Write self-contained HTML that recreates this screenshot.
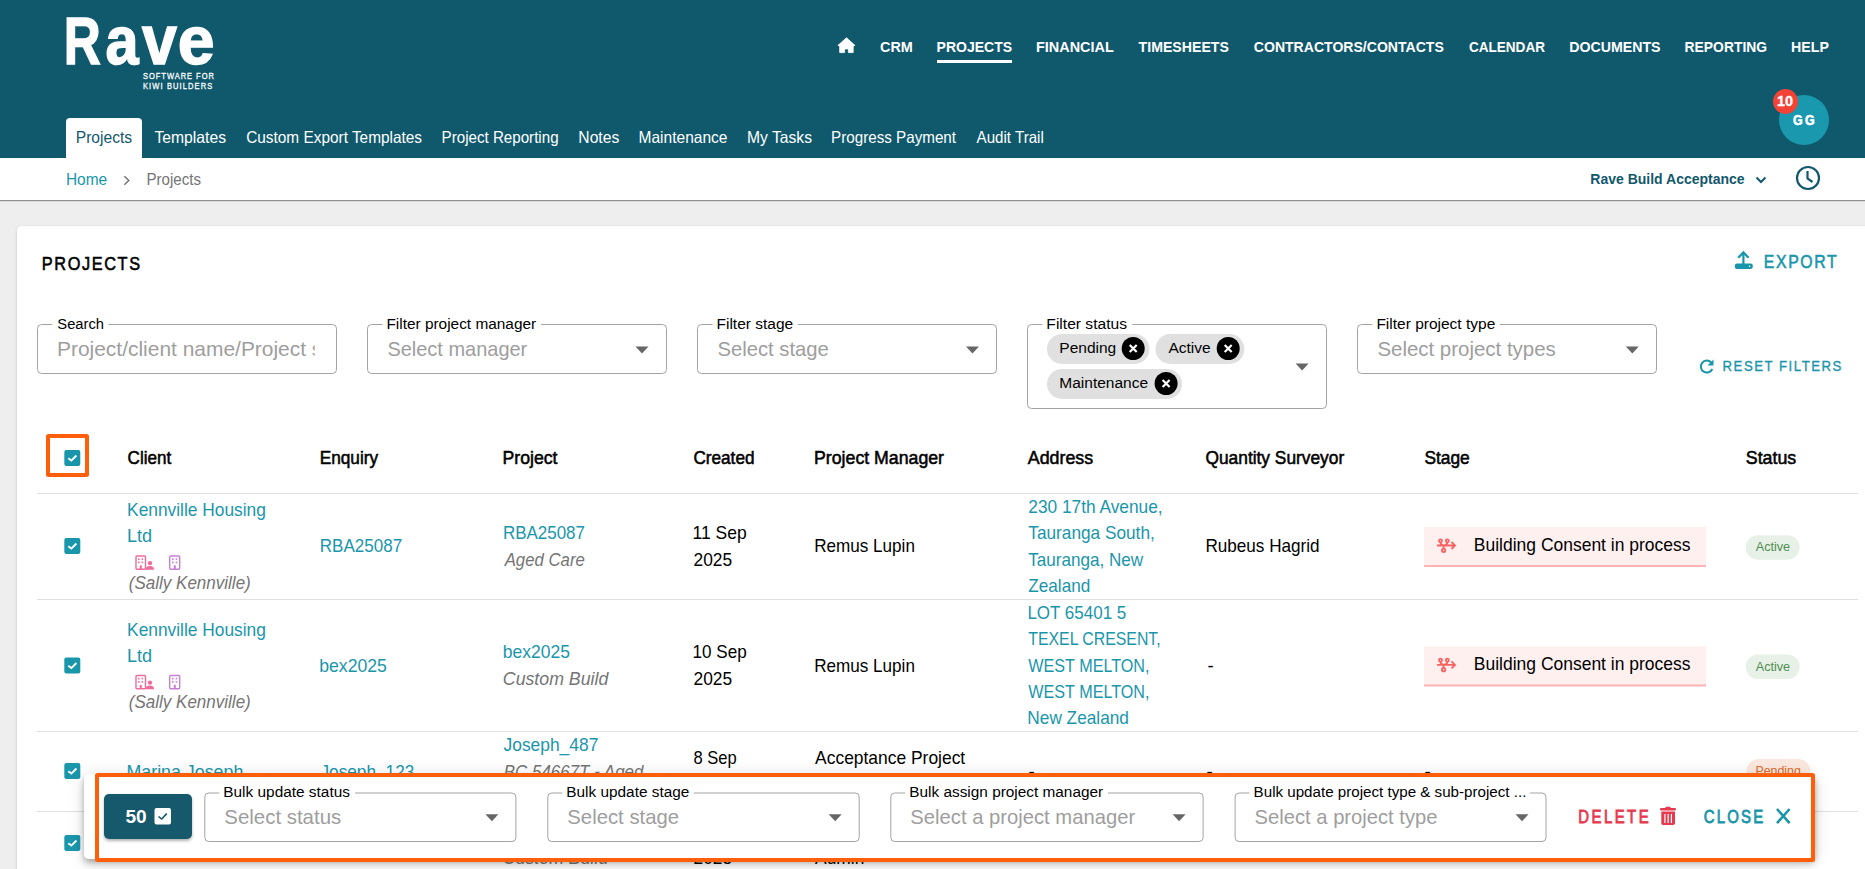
<!DOCTYPE html>
<html><head><meta charset="utf-8"><title>Projects</title>
<style>html,body{margin:0;padding:0;width:1865px;height:869px;overflow:hidden;background:#eee}svg{display:block}text{font-family:"Liberation Sans",sans-serif}</style>
</head><body><svg width="1865" height="869" viewBox="0 0 1865 869">
<rect x="0" y="0" width="1865" height="869" fill="#eeeeee"/>
<rect x="0" y="0" width="1865" height="158" fill="#10596d"/>
<text x="63.74" y="64.3" font-size="67" font-weight="bold" stroke="#fff" stroke-width="1.5" fill="#fff" textLength="37.06" lengthAdjust="spacingAndGlyphs">R</text>
<text x="105.58" y="64.3" font-size="69" font-weight="bold" stroke="#fff" stroke-width="1.5" fill="#fff" textLength="33.09" lengthAdjust="spacingAndGlyphs">a</text>
<text x="141.90" y="64.3" font-size="69.5" font-weight="bold" stroke="#fff" stroke-width="1.5" fill="#fff" textLength="34.89" lengthAdjust="spacingAndGlyphs">v</text>
<text x="177.68" y="64.3" font-size="69" font-weight="bold" stroke="#fff" stroke-width="1.5" fill="#fff" textLength="36.84" lengthAdjust="spacingAndGlyphs">e</text>
<text transform="translate(143.00 78.5) scale(0.8 1)" x="0" y="0" font-size="9.4" stroke="#fff" stroke-width="0.312" fill="#fff" style="letter-spacing:1.214px">SOFTWARE FOR</text>
<text transform="translate(143.00 88.5) scale(0.8 1)" x="0" y="0" font-size="9.4" stroke="#fff" stroke-width="0.312" fill="#fff" style="letter-spacing:1.392px">KIWI BUILDERS</text>
<path d="M846.5 37.8 L837.9 45.4 L839.7 45.9 L839.7 52.6 L844.6 52.6 L844.6 48.9 L848.4 48.9 L848.4 52.6 L853.2 52.6 L853.2 45.9 L855 45.4 Z" fill="#fff" stroke="#fff" stroke-width="0.8" stroke-linejoin="round"/>
<text x="880.00" y="52" font-size="15.5" font-weight="bold" fill="#fff" textLength="32.85" lengthAdjust="spacingAndGlyphs">CRM</text>
<text x="936.60" y="52" font-size="15.5" font-weight="bold" fill="#fff" textLength="75.51" lengthAdjust="spacingAndGlyphs">PROJECTS</text>
<text x="1036.07" y="52" font-size="15.5" font-weight="bold" fill="#fff" textLength="77.67" lengthAdjust="spacingAndGlyphs">FINANCIAL</text>
<text x="1138.60" y="52" font-size="15.5" font-weight="bold" fill="#fff" textLength="90.31" lengthAdjust="spacingAndGlyphs">TIMESHEETS</text>
<text x="1253.80" y="52" font-size="15.5" font-weight="bold" fill="#fff" textLength="190.01" lengthAdjust="spacingAndGlyphs">CONTRACTORS/CONTACTS</text>
<text x="1468.90" y="52" font-size="15.5" font-weight="bold" fill="#fff" textLength="76.07" lengthAdjust="spacingAndGlyphs">CALENDAR</text>
<text x="1569.19" y="52" font-size="15.5" font-weight="bold" fill="#fff" textLength="91.32" lengthAdjust="spacingAndGlyphs">DOCUMENTS</text>
<text x="1684.61" y="52" font-size="15.5" font-weight="bold" fill="#fff" textLength="82.45" lengthAdjust="spacingAndGlyphs">REPORTING</text>
<text x="1791.09" y="52" font-size="15.5" font-weight="bold" fill="#fff" textLength="37.82" lengthAdjust="spacingAndGlyphs">HELP</text>
<rect x="937" y="60" width="75" height="3" fill="#fff"/>
<path d="M66 158 L66 122 Q66 118 70 118 L138 118 Q142 118 142 122 L142 158 Z" fill="#fff"/>
<text x="75.75" y="143.3" font-size="16.5" fill="#12586c" textLength="56.38" lengthAdjust="spacingAndGlyphs">Projects</text>
<text x="154.40" y="143.3" font-size="16.5" fill="#fff" textLength="71.64" lengthAdjust="spacingAndGlyphs">Templates</text>
<text x="246.20" y="143.3" font-size="16.5" fill="#fff" textLength="175.83" lengthAdjust="spacingAndGlyphs">Custom Export Templates</text>
<text x="441.58" y="143.3" font-size="16.5" fill="#fff" textLength="116.98" lengthAdjust="spacingAndGlyphs">Project Reporting</text>
<text x="578.35" y="143.3" font-size="16.5" fill="#fff" textLength="40.89" lengthAdjust="spacingAndGlyphs">Notes</text>
<text x="638.56" y="143.3" font-size="16.5" fill="#fff" textLength="88.91" lengthAdjust="spacingAndGlyphs">Maintenance</text>
<text x="747.05" y="143.3" font-size="16.5" fill="#fff" textLength="64.98" lengthAdjust="spacingAndGlyphs">My Tasks</text>
<text x="831.08" y="143.3" font-size="16.5" fill="#fff" textLength="124.94" lengthAdjust="spacingAndGlyphs">Progress Payment</text>
<text x="976.60" y="143.3" font-size="16.5" fill="#fff" textLength="67.21" lengthAdjust="spacingAndGlyphs">Audit Trail</text>
<circle cx="1804" cy="120" r="25" fill="#1a98ad"/>
<text transform="translate(1793.00 124.8) scale(0.86 1)" x="0" y="0" font-size="14.5" font-weight="bold" stroke="#fff" stroke-width="0.581" fill="#fff" style="letter-spacing:2.721px">GG</text>
<circle cx="1785.5" cy="101.5" r="12.5" fill="#f44336"/>
<text x="1777.00" y="105.8" font-size="14.5" font-weight="bold" stroke="#fff" stroke-width="0.3" fill="#fff" textLength="16.06" lengthAdjust="spacingAndGlyphs">10</text>
<rect x="0" y="158" width="1865" height="42" fill="#fff"/>
<rect x="0" y="200" width="1865" height="1.2" fill="#8f8f8f"/>
<text x="65.91" y="185.2" font-size="15.6" fill="#1a96ab" textLength="41.26" lengthAdjust="spacingAndGlyphs">Home</text>
<path d="M124.3 176.2 L128.8 180.5 L124.3 184.8" fill="none" stroke="#757575" stroke-width="1.5"/>
<text x="146.43" y="185.2" font-size="15.6" fill="#757575" textLength="54.57" lengthAdjust="spacingAndGlyphs">Projects</text>
<text x="1590.30" y="183.7" font-size="15.5" font-weight="bold" fill="#12586c" textLength="154.36" lengthAdjust="spacingAndGlyphs">Rave Build Acceptance</text>
<path d="M1756.5 177.5 L1761 182 L1765.5 177.5" fill="none" stroke="#12586c" stroke-width="2"/>
<circle cx="1808" cy="178" r="11" fill="none" stroke="#12586c" stroke-width="2.2"/>
<path d="M1807.5 171 L1807.5 178.5 L1812.5 182" fill="none" stroke="#12586c" stroke-width="2.2"/>
<defs><filter id="sh" x="-5%" y="-5%" width="110%" height="110%"><feDropShadow dx="0" dy="1" stdDeviation="1.5" flood-color="#000" flood-opacity="0.18"/></filter><filter id="sh2" x="-5%" y="-60%" width="110%" height="220%"><feGaussianBlur in="SourceAlpha" stdDeviation="9" result="b1"/><feOffset in="b1" dy="1" result="o1"/><feComponentTransfer in="o1" result="c1"><feFuncA type="linear" slope="0.12"/></feComponentTransfer><feGaussianBlur in="SourceAlpha" stdDeviation="5" result="b2"/><feOffset in="b2" dy="6" result="o2"/><feComponentTransfer in="o2" result="c2"><feFuncA type="linear" slope="0.14"/></feComponentTransfer><feGaussianBlur in="SourceAlpha" stdDeviation="2.5" result="b3"/><feOffset in="b3" dy="3" result="o3"/><feComponentTransfer in="o3" result="c3"><feFuncA type="linear" slope="0.2"/></feComponentTransfer><feMerge><feMergeNode in="c1"/><feMergeNode in="c2"/><feMergeNode in="c3"/><feMergeNode in="SourceGraphic"/></feMerge></filter><filter id="sh3" x="-20%" y="-20%" width="140%" height="160%"><feDropShadow dx="0" dy="2" stdDeviation="1.5" flood-color="#000" flood-opacity="0.3"/></filter></defs>
<rect x="17" y="226" width="1900" height="700" rx="5" fill="#fff" filter="url(#sh)"/>
<text transform="translate(41.85 270.2) scale(0.85 1)" x="0" y="0" font-size="19.2" stroke="#000" stroke-width="0.588" fill="#000" style="letter-spacing:1.888px">PROJECTS</text>
<g fill="#1a96ab"><rect x="1734.8" y="263.6" width="18" height="5.4" rx="2.2"/><rect x="1742.3" y="253" width="2.2" height="11"/></g><path d="M1738.2 257.8 L1743.4 252.4 L1748.6 257.8" fill="none" stroke="#1a96ab" stroke-width="2.3"/><circle cx="1749.6" cy="266.3" r="0.8" fill="#fff"/>
<text transform="translate(1763.75 267.9) scale(0.85 1)" x="0" y="0" font-size="18.6" stroke="#1a96ab" stroke-width="0.588" fill="#1a96ab" style="letter-spacing:1.942px">EXPORT</text>
<rect x="37.5" y="324.5" width="299" height="49" rx="4" fill="none" stroke="#a3a3a3" stroke-width="1"/>
<rect x="52.3" y="322" width="56.2" height="4" fill="#fff"/>
<text x="57.30" y="328.8" font-size="15.5" fill="#000" textLength="46.79" lengthAdjust="spacingAndGlyphs">Search</text>
<text x="56.99" y="355.6" font-size="20.7" fill="#9e9e9e" textLength="265.36" lengthAdjust="spacingAndGlyphs">Project/client name/Project s</text>
<rect x="314.8" y="335" width="21" height="30" fill="#fff"/>
<rect x="367.5" y="324.5" width="299" height="49" rx="4" fill="none" stroke="#a3a3a3" stroke-width="1"/>
<rect x="382.4" y="322" width="158.60000000000002" height="4" fill="#fff"/>
<text x="386.41" y="328.8" font-size="15.5" fill="#000" textLength="149.75" lengthAdjust="spacingAndGlyphs">Filter project manager</text>
<text x="387.40" y="356" font-size="20.7" fill="#9e9e9e" textLength="139.89" lengthAdjust="spacingAndGlyphs">Select manager</text>
<path d="M635.5 346.5 L648.5 346.5 L642.0 353.5 Z" fill="#666"/>
<rect x="697.5" y="324.5" width="299" height="49" rx="4" fill="none" stroke="#a3a3a3" stroke-width="1"/>
<rect x="712.5" y="322" width="85.10000000000002" height="4" fill="#fff"/>
<text x="716.50" y="328.8" font-size="15.5" fill="#000">Filter stage</text>
<text x="717.50" y="356" font-size="20.7" fill="#9e9e9e" textLength="111.29" lengthAdjust="spacingAndGlyphs">Select stage</text>
<path d="M966 346.5 L979 346.5 L972.5 353.5 Z" fill="#666"/>
<rect x="1027.5" y="324.5" width="299" height="84" rx="4" fill="none" stroke="#a3a3a3" stroke-width="1"/>
<rect x="1042.4" y="322" width="89.79999999999995" height="4" fill="#fff"/>
<text x="1046.39" y="328.8" font-size="15.5" fill="#000" textLength="80.55" lengthAdjust="spacingAndGlyphs">Filter status</text>
<path d="M1295.6 363.5 L1308.6 363.5 L1302.1 370.5 Z" fill="#666"/>
<rect x="1047" y="334" width="102.5" height="30" rx="15" fill="#e0e0e0"/>
<text x="1059.30" y="353" font-size="15.5" fill="#000">Pending</text>
<circle cx="1133.2" cy="348.5" r="11.5" fill="#000"/>
<path d="M1129.7 345.0 L1136.7 352.0 M1136.7 345.0 L1129.7 352.0" stroke="#fff" stroke-width="2.2"/>
<rect x="1155.5" y="334" width="88.90000000000009" height="30" rx="15" fill="#e0e0e0"/>
<text x="1168.40" y="353" font-size="15.5" fill="#000">Active</text>
<circle cx="1228.2" cy="348.5" r="11.5" fill="#000"/>
<path d="M1224.7 345.0 L1231.7 352.0 M1231.7 345.0 L1224.7 352.0" stroke="#fff" stroke-width="2.2"/>
<rect x="1047" y="369" width="135" height="30" rx="15" fill="#e0e0e0"/>
<text x="1059.30" y="388" font-size="15.5" fill="#000">Maintenance</text>
<circle cx="1166.1" cy="383.5" r="11.5" fill="#000"/>
<path d="M1162.6 380.0 L1169.6 387.0 M1169.6 380.0 L1162.6 387.0" stroke="#fff" stroke-width="2.2"/>
<rect x="1357.5" y="324.5" width="299" height="49" rx="4" fill="none" stroke="#a3a3a3" stroke-width="1"/>
<rect x="1372.4" y="322" width="127.39999999999986" height="4" fill="#fff"/>
<text x="1376.40" y="328.8" font-size="15.5" fill="#000">Filter project type</text>
<text x="1377.40" y="356" font-size="20.7" fill="#9e9e9e" textLength="178.34" lengthAdjust="spacingAndGlyphs">Select project types</text>
<path d="M1625.8 346.5 L1638.8 346.5 L1632.3 353.5 Z" fill="#666"/>
<path d="M1711.2 362.5 A6 6 0 1 0 1712.3 369" fill="none" stroke="#1a96ab" stroke-width="2"/>
<path d="M1713.5 359.5 L1713.5 365.5 L1707.5 365.5 Z" fill="#1a96ab"/>
<text transform="translate(1722.55 370.8) scale(0.85 1)" x="0" y="0" font-size="15.5" stroke="#1a96ab" stroke-width="0.353" fill="#1a96ab" style="letter-spacing:1.800px">RESET FILTERS</text>
<rect x="46" y="434" width="43" height="43" rx="2.5" fill="#fe5f0a"/><rect x="50" y="438" width="35" height="35" fill="#fff"/>
<rect x="64.3" y="450" width="16" height="16" rx="2" fill="#1a96ab"/>
<path d="M68.3 458.2 L71.39999999999999 460.6 L76.39999999999999 455.5" fill="none" stroke="#fff" stroke-width="1.9"/>
<text x="127.60" y="464.3" font-size="18.6" stroke="#000" stroke-width="0.55" fill="#000" textLength="43.63" lengthAdjust="spacingAndGlyphs">Client</text>
<text x="319.67" y="464.3" font-size="18.6" stroke="#000" stroke-width="0.55" fill="#000" textLength="58.48" lengthAdjust="spacingAndGlyphs">Enquiry</text>
<text x="502.55" y="464.3" font-size="18.6" stroke="#000" stroke-width="0.55" fill="#000" textLength="54.96" lengthAdjust="spacingAndGlyphs">Project</text>
<text x="693.40" y="464.3" font-size="18.6" stroke="#000" stroke-width="0.55" fill="#000" textLength="61.12" lengthAdjust="spacingAndGlyphs">Created</text>
<text x="814.05" y="464.3" font-size="18.6" stroke="#000" stroke-width="0.55" fill="#000" textLength="129.94" lengthAdjust="spacingAndGlyphs">Project Manager</text>
<text x="1027.80" y="464.3" font-size="18.6" stroke="#000" stroke-width="0.55" fill="#000" textLength="65.28" lengthAdjust="spacingAndGlyphs">Address</text>
<text x="1205.50" y="464.3" font-size="18.6" stroke="#000" stroke-width="0.55" fill="#000" textLength="138.68" lengthAdjust="spacingAndGlyphs">Quantity Surveyor</text>
<text x="1424.40" y="464.3" font-size="18.6" stroke="#000" stroke-width="0.55" fill="#000" textLength="45.32" lengthAdjust="spacingAndGlyphs">Stage</text>
<text x="1745.80" y="464.3" font-size="18.6" stroke="#000" stroke-width="0.55" fill="#000" textLength="50.48" lengthAdjust="spacingAndGlyphs">Status</text>
<rect x="37" y="493" width="1821" height="1" fill="#e0e0e0"/>
<rect x="37" y="599" width="1821" height="1" fill="#e0e0e0"/>
<rect x="37" y="731" width="1821" height="1" fill="#e0e0e0"/>
<rect x="37" y="811" width="1821" height="1" fill="#e0e0e0"/>
<rect x="64.3" y="538" width="16" height="16" rx="2" fill="#1a96ab"/>
<path d="M68.3 546.2 L71.39999999999999 548.6 L76.39999999999999 543.5" fill="none" stroke="#fff" stroke-width="1.9"/>
<text x="127.07" y="515.9" font-size="18.6" fill="#1a96ab" textLength="138.85" lengthAdjust="spacingAndGlyphs">Kennville Housing</text>
<text x="127.03" y="541.6" font-size="18.6" fill="#1a96ab" textLength="25.10" lengthAdjust="spacingAndGlyphs">Ltd</text>
<g fill="none" stroke="#ef6b9b" stroke-width="1.4"><rect x="136" y="556.0" width="9.5" height="13.3" rx="1"/></g>
<g fill="#ef6b9b"><rect x="138" y="558.3" width="1.6" height="1.6"/><rect x="141.5" y="558.3" width="1.6" height="1.6"/><rect x="138" y="561.5999999999999" width="1.6" height="1.6"/><rect x="141.5" y="561.5999999999999" width="1.6" height="1.6"/><rect x="139.8" y="565.3" width="2" height="4"/><circle cx="150" cy="563.0999999999999" r="2.2"/><path d="M145.5 569.8 Q145.5 566.0999999999999 150 566.0999999999999 Q154 566.0999999999999 154 569.8 Z"/></g>
<g fill="none" stroke="#c77fd6" stroke-width="1.4"><rect x="169.7" y="556.0" width="10" height="13.3" rx="1"/></g>
<g fill="#c77fd6"><rect x="172" y="558.3" width="1.6" height="1.6"/><rect x="175.6" y="558.3" width="1.6" height="1.6"/><rect x="172" y="561.5999999999999" width="1.6" height="1.6"/><rect x="175.6" y="561.5999999999999" width="1.6" height="1.6"/><rect x="173.8" y="565.3" width="2" height="4"/></g>
<text x="128.80" y="588.8" font-size="18.6" font-style="italic" fill="#757575" textLength="121.98" lengthAdjust="spacingAndGlyphs">(Sally Kennville)</text>
<text x="319.78" y="552.1" font-size="18.6" fill="#1a96ab" textLength="82.33" lengthAdjust="spacingAndGlyphs">RBA25087</text>
<text x="502.89" y="539.2" font-size="18.6" fill="#1a96ab" textLength="82.12" lengthAdjust="spacingAndGlyphs">RBA25087</text>
<text x="504.70" y="566" font-size="18.6" font-style="italic" fill="#757575" textLength="80.11" lengthAdjust="spacingAndGlyphs">Aged Care</text>
<text x="692.56" y="539.4" font-size="18.6" fill="#000" textLength="54.16" lengthAdjust="spacingAndGlyphs">11 Sep</text>
<text x="693.50" y="566.4" font-size="18.6" fill="#000" textLength="38.62" lengthAdjust="spacingAndGlyphs">2025</text>
<text x="814.18" y="552.1" font-size="18.6" fill="#000" textLength="100.73" lengthAdjust="spacingAndGlyphs">Remus Lupin</text>
<text x="1028.30" y="513.1" font-size="18.6" fill="#1a96ab" textLength="134.38" lengthAdjust="spacingAndGlyphs">230 17th Avenue,</text>
<text x="1028.30" y="539.4" font-size="18.6" fill="#1a96ab" textLength="126.48" lengthAdjust="spacingAndGlyphs">Tauranga South,</text>
<text x="1028.30" y="565.7" font-size="18.6" fill="#1a96ab" textLength="114.77" lengthAdjust="spacingAndGlyphs">Tauranga, New</text>
<text x="1028.30" y="592.0" font-size="18.6" fill="#1a96ab" textLength="62.01" lengthAdjust="spacingAndGlyphs">Zealand</text>
<text x="1205.38" y="552.1" font-size="18.6" fill="#000" textLength="114.24" lengthAdjust="spacingAndGlyphs">Rubeus Hagrid</text>
<rect x="1424" y="527" width="282" height="40" fill="#fff0f0"/>
<rect x="1424" y="565" width="282" height="2" fill="#ffb4b4"/>
<g fill="none" stroke="#fb6262" stroke-width="1.8"><circle cx="1440.5" cy="540.8" r="1.5"/><circle cx="1447.3" cy="540.8" r="1.5"/><circle cx="1443.6" cy="550.3" r="1.7"/><path d="M1440.5 542.3 Q1440.5 545.3 1443.6 545.3 Q1447.3 545.3 1447.3 542.3 M1443.6 545.3 L1443.6 548.6 M1437 545.5 L1455 545.5 M1451.5 542 L1455 545.5 L1451.5 549"/></g>
<text x="1473.86" y="550.8" font-size="18.6" fill="#000" textLength="216.62" lengthAdjust="spacingAndGlyphs">Building Consent in process</text>
<rect x="1745.8" y="535.2" width="53.90000000000009" height="24.5" rx="12.25" fill="#e7f1e7"/>
<text x="1755.80" y="551.4000000000001" font-size="13.4" fill="#4f8f4f" textLength="34.32" lengthAdjust="spacingAndGlyphs">Active</text>
<rect x="64.3" y="657.5" width="16" height="16" rx="2" fill="#1a96ab"/>
<path d="M68.3 665.7 L71.39999999999999 668.1 L76.39999999999999 663.0" fill="none" stroke="#fff" stroke-width="1.9"/>
<text x="127.07" y="635.8" font-size="18.6" fill="#1a96ab" textLength="138.85" lengthAdjust="spacingAndGlyphs">Kennville Housing</text>
<text x="127.03" y="662.1" font-size="18.6" fill="#1a96ab" textLength="25.10" lengthAdjust="spacingAndGlyphs">Ltd</text>
<g fill="none" stroke="#ef6b9b" stroke-width="1.4"><rect x="136" y="675.5" width="9.5" height="13.3" rx="1"/></g>
<g fill="#ef6b9b"><rect x="138" y="677.8" width="1.6" height="1.6"/><rect x="141.5" y="677.8" width="1.6" height="1.6"/><rect x="138" y="681.0999999999999" width="1.6" height="1.6"/><rect x="141.5" y="681.0999999999999" width="1.6" height="1.6"/><rect x="139.8" y="684.8" width="2" height="4"/><circle cx="150" cy="682.5999999999999" r="2.2"/><path d="M145.5 689.3 Q145.5 685.5999999999999 150 685.5999999999999 Q154 685.5999999999999 154 689.3 Z"/></g>
<g fill="none" stroke="#c77fd6" stroke-width="1.4"><rect x="169.7" y="675.5" width="10" height="13.3" rx="1"/></g>
<g fill="#c77fd6"><rect x="172" y="677.8" width="1.6" height="1.6"/><rect x="175.6" y="677.8" width="1.6" height="1.6"/><rect x="172" y="681.0999999999999" width="1.6" height="1.6"/><rect x="175.6" y="681.0999999999999" width="1.6" height="1.6"/><rect x="173.8" y="684.8" width="2" height="4"/></g>
<text x="128.80" y="708.3" font-size="18.6" font-style="italic" fill="#757575" textLength="121.98" lengthAdjust="spacingAndGlyphs">(Sally Kennville)</text>
<text x="319.25" y="672.3" font-size="18.6" fill="#1a96ab" textLength="67.67" lengthAdjust="spacingAndGlyphs">bex2025</text>
<text x="502.86" y="658.4" font-size="18.6" fill="#1a96ab" textLength="67.26" lengthAdjust="spacingAndGlyphs">bex2025</text>
<text x="502.85" y="684.6" font-size="18.6" font-style="italic" fill="#757575" textLength="105.43" lengthAdjust="spacingAndGlyphs">Custom Build</text>
<text x="692.58" y="658.4" font-size="18.6" fill="#000" textLength="54.13" lengthAdjust="spacingAndGlyphs">10 Sep</text>
<text x="693.50" y="684.6" font-size="18.6" fill="#000" textLength="38.62" lengthAdjust="spacingAndGlyphs">2025</text>
<text x="814.18" y="672.3" font-size="18.6" fill="#000" textLength="100.73" lengthAdjust="spacingAndGlyphs">Remus Lupin</text>
<text x="1027.39" y="619.0" font-size="18.6" fill="#1a96ab" textLength="98.92" lengthAdjust="spacingAndGlyphs">LOT 65401 5</text>
<text x="1028.30" y="645.25" font-size="18.6" fill="#1a96ab" textLength="132.39" lengthAdjust="spacingAndGlyphs">TEXEL CRESENT,</text>
<text x="1028.30" y="671.5" font-size="18.6" fill="#1a96ab" textLength="121.21" lengthAdjust="spacingAndGlyphs">WEST MELTON,</text>
<text x="1028.30" y="697.75" font-size="18.6" fill="#1a96ab" textLength="121.21" lengthAdjust="spacingAndGlyphs">WEST MELTON,</text>
<text x="1027.37" y="724.0" font-size="18.6" fill="#1a96ab" textLength="101.54" lengthAdjust="spacingAndGlyphs">New Zealand</text>
<text x="1207.40" y="672" font-size="18.6" fill="#000">-</text>
<rect x="1424" y="646.4" width="282" height="40" fill="#fff0f0"/>
<rect x="1424" y="684.4" width="282" height="2" fill="#ffb4b4"/>
<g fill="none" stroke="#fb6262" stroke-width="1.8"><circle cx="1440.5" cy="660.1999999999999" r="1.5"/><circle cx="1447.3" cy="660.1999999999999" r="1.5"/><circle cx="1443.6" cy="669.6999999999999" r="1.7"/><path d="M1440.5 661.6999999999999 Q1440.5 664.6999999999999 1443.6 664.6999999999999 Q1447.3 664.6999999999999 1447.3 661.6999999999999 M1443.6 664.6999999999999 L1443.6 668.0 M1437 664.9 L1455 664.9 M1451.5 661.4 L1455 664.9 L1451.5 668.4"/></g>
<text x="1473.86" y="670.1999999999999" font-size="18.6" fill="#000" textLength="216.62" lengthAdjust="spacingAndGlyphs">Building Consent in process</text>
<rect x="1745.8" y="654.5" width="53.90000000000009" height="24.5" rx="12.25" fill="#e7f1e7"/>
<text x="1755.80" y="670.7" font-size="13.4" fill="#4f8f4f" textLength="34.32" lengthAdjust="spacingAndGlyphs">Active</text>
<rect x="64.3" y="763" width="16" height="16" rx="2" fill="#1a96ab"/>
<path d="M68.3 771.2 L71.39999999999999 773.6 L76.39999999999999 768.5" fill="none" stroke="#fff" stroke-width="1.9"/>
<text x="126.44" y="778" font-size="18.6" fill="#1a96ab" textLength="116.89" lengthAdjust="spacingAndGlyphs">Marina Joseph</text>
<text x="320.50" y="778" font-size="18.6" fill="#1a96ab" textLength="93.82" lengthAdjust="spacingAndGlyphs">Joseph_123</text>
<text x="503.50" y="751.3" font-size="18.6" fill="#1a96ab" textLength="94.82" lengthAdjust="spacingAndGlyphs">Joseph_487</text>
<text x="503.80" y="778" font-size="18.6" font-style="italic" fill="#757575" textLength="139.60" lengthAdjust="spacingAndGlyphs">BC 54667T - Aged</text>
<text x="693.50" y="764" font-size="18.6" fill="#000" textLength="43.30" lengthAdjust="spacingAndGlyphs">8 Sep</text>
<text x="815.10" y="764" font-size="18.6" fill="#000" textLength="150.12" lengthAdjust="spacingAndGlyphs">Acceptance Project</text>
<text x="1028.50" y="778" font-size="18.6" fill="#000">-</text>
<text x="1206.50" y="778" font-size="18.6" fill="#000">-</text>
<text x="1424.50" y="778" font-size="18.6" fill="#000">-</text>
<rect x="1746.4" y="759" width="64.0" height="24.5" rx="12.25" fill="#fbe9df"/>
<text x="1755.48" y="775.2" font-size="13.4" fill="#de6a2c" textLength="45.34" lengthAdjust="spacingAndGlyphs">Pending</text>
<rect x="64.3" y="835" width="16" height="16" rx="2" fill="#1a96ab"/>
<path d="M68.3 843.2 L71.39999999999999 845.6 L76.39999999999999 840.5" fill="none" stroke="#fff" stroke-width="1.9"/>
<text x="502.85" y="863.6" font-size="18.6" font-style="italic" fill="#757575" textLength="105.43" lengthAdjust="spacingAndGlyphs">Custom Build</text>
<text x="693.50" y="863.6" font-size="18.6" fill="#000" textLength="38.62" lengthAdjust="spacingAndGlyphs">2025</text>
<text x="815.10" y="863.6" font-size="18.6" fill="#000" textLength="49.22" lengthAdjust="spacingAndGlyphs">Admin</text>
<rect x="84" y="774" width="1731" height="85" rx="5" fill="#fff" filter="url(#sh2)"/>
<rect x="95" y="773" width="1720" height="89" rx="2.5" fill="#fe5f0a"/><rect x="99" y="777" width="1712" height="81" fill="#fff"/>
<rect x="104" y="794" width="88" height="45" rx="5" fill="#12586c" filter="url(#sh3)"/>
<text x="125.40" y="823" font-size="18.6" font-weight="bold" fill="#fff" textLength="21.25" lengthAdjust="spacingAndGlyphs">50</text>
<rect x="154.5" y="808" width="16.5" height="16.5" rx="2" fill="#fff"/>
<path d="M158.5 816.5 L161.6 819 L166.8 813.6" fill="none" stroke="#12586c" stroke-width="1.6"/>
<rect x="204.8" y="793.0" width="311.09999999999997" height="48.5" rx="4" fill="none" stroke="#a3a3a3" stroke-width="1"/>
<rect x="219.3" y="790.5" width="135.89999999999998" height="4" fill="#fff"/>
<text x="223.31" y="796.7" font-size="15.5" fill="#000" textLength="126.64" lengthAdjust="spacingAndGlyphs">Bulk update status</text>
<text x="224.30" y="824.2" font-size="20.7" fill="#9e9e9e" textLength="116.94" lengthAdjust="spacingAndGlyphs">Select status</text>
<path d="M485.4 814.3 L498.4 814.3 L491.9 821.3 Z" fill="#666"/>
<rect x="547.8" y="793.0" width="311.4000000000001" height="48.5" rx="4" fill="none" stroke="#a3a3a3" stroke-width="1"/>
<rect x="562.3" y="790.5" width="131.4000000000001" height="4" fill="#fff"/>
<text x="566.31" y="796.7" font-size="15.5" fill="#000" textLength="123.01" lengthAdjust="spacingAndGlyphs">Bulk update stage</text>
<text x="567.30" y="824.2" font-size="20.7" fill="#9e9e9e" textLength="111.80" lengthAdjust="spacingAndGlyphs">Select stage</text>
<path d="M828.7 814.3 L841.7 814.3 L835.2 821.3 Z" fill="#666"/>
<rect x="890.8" y="793.0" width="312.29999999999995" height="48.5" rx="4" fill="none" stroke="#a3a3a3" stroke-width="1"/>
<rect x="905.3" y="790.5" width="202.70000000000005" height="4" fill="#fff"/>
<text x="909.31" y="796.7" font-size="15.5" fill="#000" textLength="193.85" lengthAdjust="spacingAndGlyphs">Bulk assign project manager</text>
<text x="910.30" y="824.2" font-size="20.7" fill="#9e9e9e" textLength="224.89" lengthAdjust="spacingAndGlyphs">Select a project manager</text>
<path d="M1172.6 814.3 L1185.6 814.3 L1179.1 821.3 Z" fill="#666"/>
<rect x="1235.1" y="793.0" width="310.9000000000001" height="48.5" rx="4" fill="none" stroke="#a3a3a3" stroke-width="1"/>
<rect x="1249.6" y="790.5" width="280.5" height="4" fill="#fff"/>
<text x="1253.62" y="796.7" font-size="15.5" fill="#000" textLength="272.75" lengthAdjust="spacingAndGlyphs">Bulk update project type &amp; sub-project ...</text>
<text x="1254.60" y="824.2" font-size="20.7" fill="#9e9e9e" textLength="182.89" lengthAdjust="spacingAndGlyphs">Select a project type</text>
<path d="M1515.5 814.3 L1528.5 814.3 L1522.0 821.3 Z" fill="#666"/>
<text transform="translate(1578.35 822.7) scale(0.85 1)" x="0" y="0" font-size="17.6" stroke="#e63a50" stroke-width="0.824" fill="#e63a50" style="letter-spacing:2.847px">DELETE</text>
<g fill="#e63a50"><rect x="1660" y="808" width="16" height="2.6" rx="1.3"/><rect x="1665.4" y="806.8" width="5.2" height="2.2" rx="0.9"/><path d="M1661.3 811.6 L1675 811.6 L1675 823.2 Q1675 825 1673.2 825 L1663.1 825 Q1661.3 825 1661.3 823.2 Z"/></g><g fill="#fff"><rect x="1664.3" y="814" width="1.2" height="9"/><rect x="1667.55" y="814" width="1.2" height="9"/><rect x="1670.8" y="814" width="1.2" height="9"/></g>
<text transform="translate(1703.80 822.7) scale(0.85 1)" x="0" y="0" font-size="17.6" stroke="#1a96ab" stroke-width="0.824" fill="#1a96ab" style="letter-spacing:2.567px">CLOSE</text>
<path d="M1777 809 L1789.6 823.2 M1789.6 809 L1777 823.2" stroke="#1a96ab" stroke-width="2.6"/>
</svg></body></html>
